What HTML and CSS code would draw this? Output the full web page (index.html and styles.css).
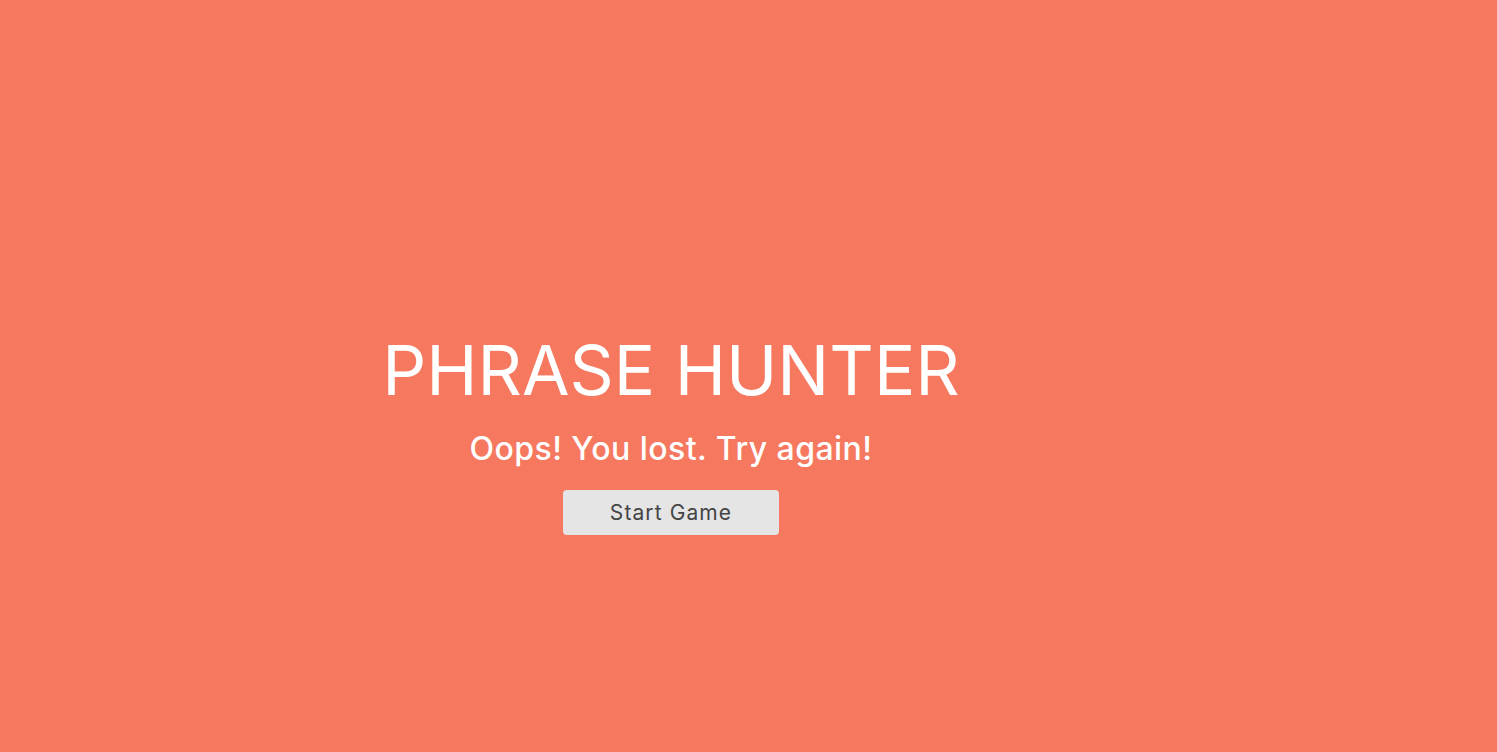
FILE: index.html
```html
<!DOCTYPE html>
<html lang="en">
<head>
<meta charset="utf-8">
<title>Phrase Hunter</title>
<link rel="stylesheet" href="styles.css">
</head>
<body>
<div class="overlay lose">
  <h2 class="title">PHRASE HUNTER</h2>
  <h1 class="message">Oops! You lost. Try again!</h1>
  <button class="btn-reset">Start Game</button>
</div>
</body>
</html>
```
FILE: styles.css
```css
html, body {
  margin: 0;
  padding: 0;
}
body {
  background: #f5785f;
  font-family: Inter, "Noto Sans", sans-serif;
}
.overlay {
  box-sizing: border-box;
  height: 752px;
  display: flex;
  flex-direction: column;
  align-items: center;
  padding: 330px 155px 0 0;
}
.title {
  margin: 0;
  color: #fff;
  font-weight: 400;
  font-size: 69px;
  line-height: 80px;
}
.message {
  margin: 19px 0 0;
  color: #fff;
  font-weight: 500;
  font-size: 32px;
  line-height: 40px;
  letter-spacing: 0.45px;
}
.btn-reset {
  margin-top: 21px;
  width: 216px;
  height: 45px;
  border: none;
  border-radius: 4px;
  background: #e5e5e5;
  color: #444;
  font-family: inherit;
  font-size: 21px;
  letter-spacing: 1.1px;
}
```
